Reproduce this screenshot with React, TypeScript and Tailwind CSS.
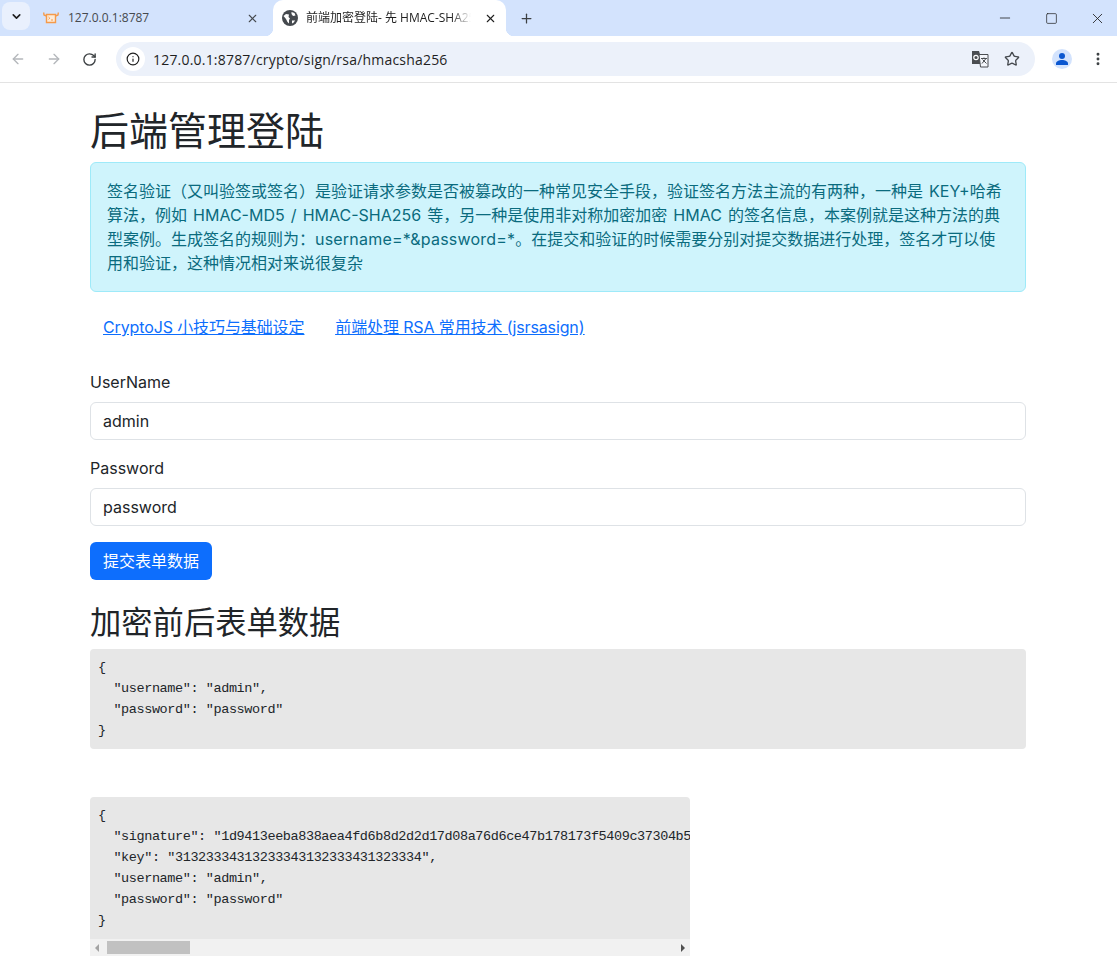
import { ArrowLeft, ArrowRight, Info, Minus, Plus, RotateCw, Square, Star, X, ChevronDown, EllipsisVertical } from "lucide-react";

const chromeFont = "font-['Open_Sans','Noto_Sans_CJK_SC',sans-serif]";
const pageFont = "font-['Inter','Noto_Sans_CJK_SC',sans-serif]";
const monoFont = "font-['Liberation_Mono',monospace] text-[13.5px] leading-[21px] tracking-[-0.4px]";

const signedJson = `{
  "signature": "1d9413eeba838aea4fd6b8d2d2d17d08a76d6ce47b178173f5409c37304b5e6f0a12c4d87b3e19a0c6",
  "key": "31323334313233343132333431323334",
  "username": "admin",
  "password": "password"
}`;

const plainJson = `{
  "username": "admin",
  "password": "password"
}`;

const Favicon = () => (
  <svg width="16" height="12" viewBox="0 0 16 12" fill="none" stroke="#f59a4a" strokeWidth="1.4">
    <path d="M3.5 2.5h9v8h-9z" fill="#fdebd8" />
    <path d="M3.5 4 1 3 .7 .5M12.5 4 15 3l.3-2.5" />
    <path d="M5.5 5l1.3 1.2L5.5 7.4M8 8h2" strokeWidth="1" />
  </svg>
);

const Globe = () => (
  <svg width="16" height="16" viewBox="0 0 16 16">
    <circle cx="8" cy="8" r="8" fill="#45494e" />
    <path d="M1.5 6 4 4l3 .5L6.5 7 8 8.5 7 10v3.5L5.5 12 4 9zM9.5 2l3 1 1 2.5-2.5.5L9.5 4zM10 10.5h3.2L11 13.3h-1z" fill="#fff" />
  </svg>
);

const TranslateIcon = () => (
  <svg width="18" height="18" viewBox="0 0 18 18">
    <path d="M1 1h7l4 13H1z" fill="#4a4d51" />
    <path d="M8 4.5h9v12.5H9.5z" fill="#f4f6fb" stroke="#4a4d51" strokeWidth="1" />
    <circle cx="5" cy="7.5" r="2.2" fill="none" stroke="#fff" strokeWidth="1.2" />
    <path d="M10 8.5h6M13 7.5v1M15 8.5l-4 5M11.5 9.5l4 4" stroke="#4a4d51" strokeWidth="1" fill="none" />
  </svg>
);

const Tab = ({ active, title, icon }: { active?: boolean; title: string; icon: React.ReactNode }) => (
  <div className={active ? "relative flex h-[36px] w-[233px] items-center rounded-t-[10px] bg-white pl-[9px]" : "flex h-[36px] w-[240px] items-center pl-[9px]"}>
    {active && <div className="absolute bottom-0 -left-2 h-2 w-2 bg-[radial-gradient(circle_at_0_0,#d3e3fd_8px,#fff_8.5px)]" />}
    {active && <div className="absolute bottom-0 -right-2 h-2 w-2 bg-[radial-gradient(circle_at_100%_0,#d3e3fd_8px,#fff_8.5px)]" />}
    <div className={active ? "flex w-[16px] justify-center" : "flex w-[17px] justify-center"}>{icon}</div>
    <span className={active ? "ml-[8px] w-[165px] overflow-hidden text-[12px] whitespace-nowrap text-[#1f1f1f] [mask-image:linear-gradient(to_right,#000_88%,transparent)]" : "ml-[9px] w-[175px] overflow-hidden text-[12px] whitespace-nowrap text-[#45494e]"}>
      {title}
    </span>
    <X className={active ? "ml-[13px] text-[#1f1f1f]" : "ml-[3px] text-[#45494e]"} size={13} strokeWidth={2} />
  </div>
);

const BrowserChrome = () => (
  <div className={`${chromeFont} shrink-0`}>
    <div className="flex h-[36px] items-center bg-[#d3e3fd]">
      <div className="mt-[-4px] ml-[2px] flex h-[28px] w-[28px] items-center justify-center rounded-lg bg-[#e9f0fd]">
        <ChevronDown size={13} strokeWidth={3} className="text-[#1f1f1f]" />
      </div>
      <div className="ml-[3px]">
        <Tab title="127.0.0.1:8787" icon={<Favicon />} />
      </div>
      <Tab active title="前端加密登陆- 先 HMAC-SHA256 再 RSA" icon={<Globe />} />
      <Plus size={15} strokeWidth={2} className="ml-[13px] text-[#3c4043]" />
      <div className="ml-auto flex items-center gap-[30px] pr-[11px] text-[#1f1f1f]">
        <Minus size={16} strokeWidth={1.2} className="mr-[1px]" />
        <Square size={13} strokeWidth={1.3} className="mx-[1px]" />
        <X size={17} strokeWidth={1.2} />
      </div>
    </div>
    <div className="flex h-[47px] items-center border-b border-[#e3e3e3] bg-white">
      <ArrowLeft size={16} strokeWidth={2} className="ml-[10px] text-[#b4b7bb]" />
      <ArrowRight size={16} strokeWidth={2} className="ml-[20px] text-[#b4b7bb]" />
      <RotateCw size={15} strokeWidth={2.2} className="ml-[20px] text-[#3c4043]" />
      <div className="ml-[19px] flex h-[34px] w-[919px] items-center rounded-full bg-[#ecf1fa]">
        <div className="ml-[5px] flex h-[24px] w-[24px] items-center justify-center rounded-full bg-white">
          <Info size={14} strokeWidth={2} className="text-[#1f1f1f]" />
        </div>
        <span className="ml-[8px] text-[14px] tracking-[0.2px] text-[#1f1f1f]">127.0.0.1:8787/crypto/sign/rsa/hmacsha256</span>
        <div className="ml-auto flex items-center pr-[15px]">
          <TranslateIcon />
          <Star size={16} strokeWidth={2} className="ml-[15px] text-[#45494e]" />
        </div>
      </div>
      <div className="ml-[17px] flex h-[20px] w-[20px] items-center justify-center rounded-full bg-[#d3e3fd]">
        <svg width="14" height="14" viewBox="0 0 14 14" fill="#0b57d0">
          <circle cx="7" cy="4" r="3" />
          <path d="M1 13v-1.5C1 9.5 4 8 7 8s6 1.5 6 3.5V13z" />
        </svg>
      </div>
      <EllipsisVertical size={16} strokeWidth={2.4} className="ml-[18px] text-[#3c4043]" />
    </div>
  </div>
);

const Field = ({ label, value }: { label: string; value: string }) => (
  <div className="mb-[16px]">
    <label className="mb-[8px] block leading-[24px]">{label}</label>
    <div className="h-[38px] rounded-[6px] border border-[#dee2e6] bg-white px-[12px] py-[6px] leading-[24px]">{value}</div>
  </div>
);

export default function App() {
  return (
    <div className={`${pageFont} min-h-[979px] bg-white text-[16px] text-[#212529]`}>
      <BrowserChrome />
      <div className="mx-[90px] w-[936px]">
        <h1 className="mt-[24px] mb-[7px] text-[39px] leading-[48px] font-normal">后端管理登陆</h1>
        <div className="mb-[15px] rounded-[6px] border border-[#9eeaf9] bg-[#cff4fc] p-[16px] leading-[24px] text-[#0a6b7e] [word-spacing:1.6px]">
          签名验证（又叫验签或签名）是验证请求参数是否被篡改的一种常见安全手段，验证签名方法主流的有两种，一种是 KEY+哈希算法，例如 HMAC-MD5 / HMAC-SHA256 等，另一种是使用非对称加密加密 HMAC 的签名信息，本案例就是这种方法的典型案例。生成签名的规则为：<span className="tracking-[0.2px]">username=*&amp;password=*</span>。在提交和验证的时候需要分别对提交数据进行处理，签名才可以使用和验证，这种情况相对来说很复杂
        </div>
        <div className="mb-[23px] flex gap-[31px] px-[13px] py-[8px] leading-[24px] tracking-[-0.12px] text-[#0d6efd] underline">
          <a>CryptoJS 小技巧与基础设定</a>
          <a>前端处理 RSA 常用技术 (jsrsasign)</a>
        </div>
        <Field label="UserName" value="admin" />
        <Field label="Password" value="password" />
        <button className="block h-[38px] rounded-[6px] bg-[#0d6efd] px-[13px] text-white">提交表单数据</button>
        <h2 className="mt-[24px] mb-[7px] text-[31.3px] leading-[38px] font-normal">加密前后表单数据</h2>
        <pre className={`mb-[48px] rounded-[4px] bg-[#e7e7e7] p-[8px] ${monoFont}`}>{plainJson}</pre>
        <div className="w-[600px] overflow-hidden rounded-t-[4px] bg-[#e7e7e7]">
          <pre className={`overflow-hidden p-[8px] ${monoFont}`}>{signedJson}</pre>
          <div className="flex h-[17px] items-center bg-[#f1f1f1]">
            <span className="ml-[5px] h-0 w-0 border-y-[4px] border-r-[4px] border-y-transparent border-r-[#a3a3a3]" />
            <div className="ml-[8px] h-[13px] w-[83px] bg-[#c1c1c1]" />
            <span className="mr-[5px] ml-auto h-0 w-0 border-y-[4px] border-l-[4px] border-y-transparent border-l-[#505050]" />
          </div>
        </div>
      </div>
    </div>
  );
}
